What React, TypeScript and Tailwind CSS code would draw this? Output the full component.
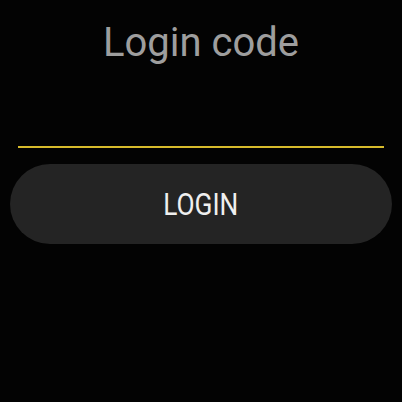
export default function App() {
  return (
    <div className="w-[402px] h-[402px] bg-[#030303] overflow-hidden font-['Roboto',sans-serif]">
      {/* Title */}
      <div className="pt-[19px] text-center text-[40px] leading-[47px] text-[#9e9e9e]">
        Login code
      </div>

      {/* Code input underline */}
      <div className="mx-[18px] mt-[80px] h-[2px] bg-[#d7bb2c]" />

      {/* Login button */}
      <div className="mx-[10px] mt-[16px] h-[80px] rounded-full bg-[#242424] flex items-center justify-center">
        <span className="text-[32px] leading-none text-[#efefef] scale-x-82 inline-block">
          LOGIN
        </span>
      </div>
    </div>
  );
}
